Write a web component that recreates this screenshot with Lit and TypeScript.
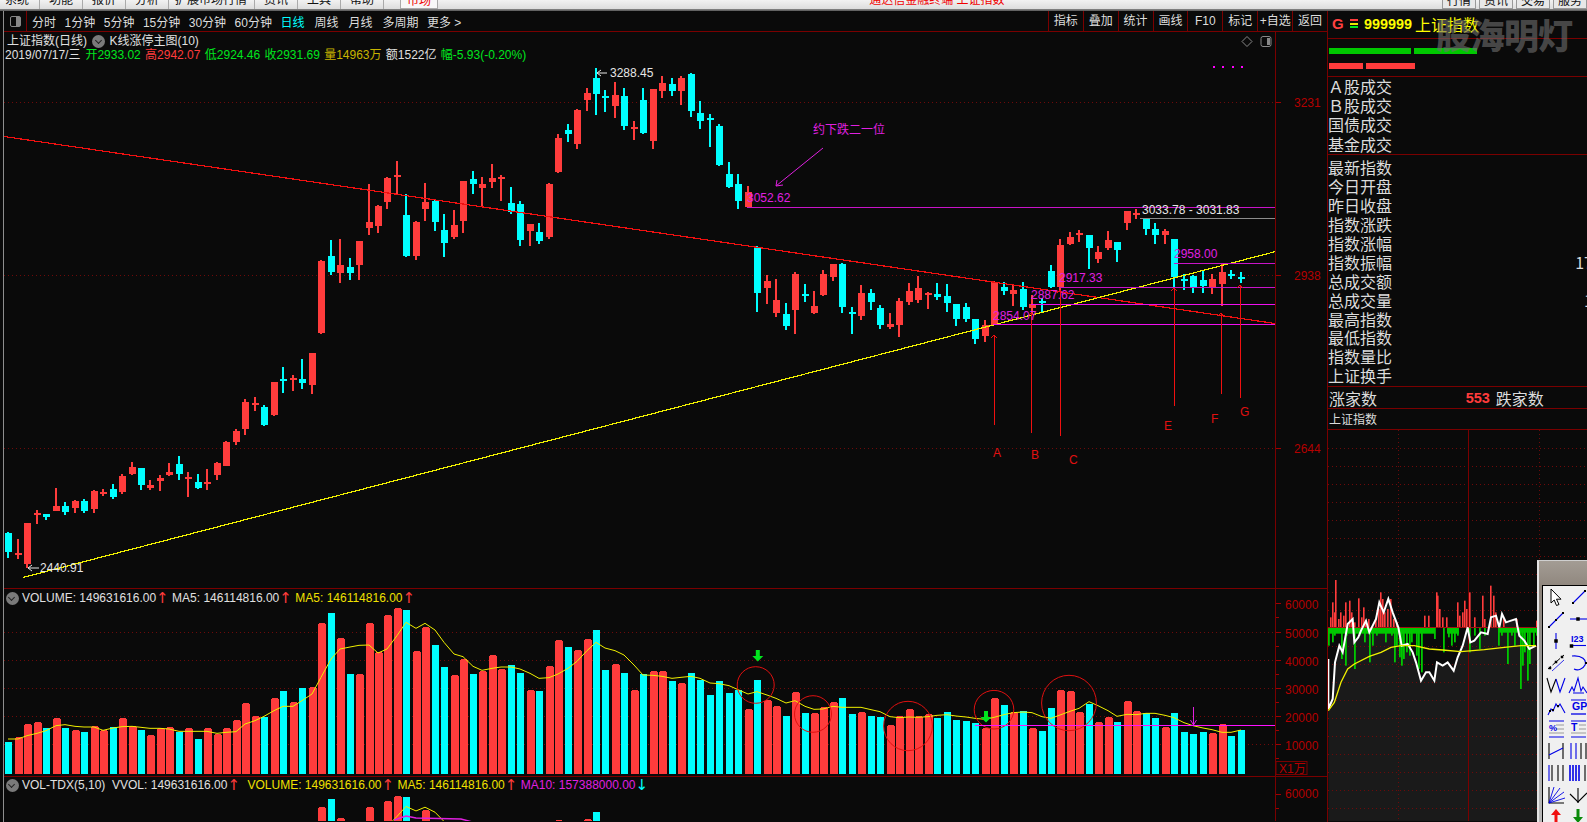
import { LitElement, html, svg, css } from "lit";
import { customElement } from "lit/decorators.js";

type C = [string, number, number, number, number];
const A: C[] = [["c",697,700,758,776],["r",717,760,765,776],["r",669,669,793,803],["r",630,638,644,671],["c",643,643,651,662],["r",565,618,633,635],["c",606,618,637,645],["r",601,604,626,641],["c",598,604,633,641],["r",571,574,629,640],["r",567,575,578,587],["c",552,568,591,596],["r",522,528,576,581],["r",487,502,522,525],["c",504,504,554,569],["r",541,556,564,572],["r",526,535,545,575],["r",490,517,527,530],["c",468,493,524,539],["r",517,531,534,593],["c",522,546,564,567],["r",508,547,551,572],["r",487,489,525,540],["r",424,426,498,500],["r",388,393,426,437],["r",297,306,386,404],["r",292,310,315,333],["c",316,321,374,380],["r",246,246,344,347],["c",201,238,245,278],["r",226,234,238,275],["c",178,238,250,267],["r",159,159,254,281]];
const B: C[] = [["r",600,603,819,821],["c",540,588,636,645],["r",538,615,639,669],["c",594,621,639,660],["r",543,543,615,660],["r",372,486,504,525],["r",435,438,498,519],["r",351,354,426,447],["r",303,345,351,405],["c",402,465,588,591],["r",483,486,588,600],["r",369,426,447,483],["c",417,423,486,513],["c",462,510,549,591],["r",450,495,531,537],["r",363,363,483,519],["c",333,357,372,402],["r",351,372,384,441],["r",312,354,366,384],["r",345,351,357,423],["c",381,429,456,462],["c",423,432,540,558],["r",492,492,513,558],["c",489,516,543,552],["r",369,372,531,537],["r",222,234,336,339],["c",192,210,222,246],["r",147,150,252,267],["r",84,99,120,153],["c",24,54,102,165],["c",90,107,111,156],["r",66,105,138,174],["c",84,108,198,210],["r",183,201,207,240],
["c",84,120,219,222],["r",87,87,243,267],["r",48,69,93,114],["c",54,72,93,108],["r",48,54,93,135],["c",39,42,153,171],["c",123,159,183,207],["c",162,174,177,261],["c",192,198,315,318],["c",306,342,381,384],["c",342,372,423,447],["r",378,396,441,441],["c",558,561,699,756],["r",645,663,684,732],["r",657,720,759,771],["c",729,762,798,810],["r",636,642,750,822],["c",672,702,705,726],["r",693,738,759,762],["r",630,642,705,708],["r",612,612,651,663],["c",609,612,741,759],["c",741,756,762,822],["r",675,699,768,780],["c",687,699,726,750],["c",735,744,795,807],["r",759,792,801,807],["r",714,723,795,831],["r",669,693,726,735],["r",648,684,720,729],["r",696,699,705,747],["c",669,702,711,720],["c",672,708,729,756],["c",732,732,777,798],["c",729,741,777,786],["c",777,777,837,852]];
const D: C[] = [["r",390,405,438,456],["r",273,276,405,405],["c",276,291,303,315],["r",285,300,312,348],["c",276,297,351,360],["r",315,342,354,375],["c",324,333,336,366],["c",225,243,290,294],["r",147,165,291,300],["r",126,141,162,165],["r",120,129,135,156],["c",135,135,174,237],["r",168,186,207,219],["r",123,150,174,180],["c",156,156,180,216],["r",63,63,99,120],["r",57,69,75,87],["c",87,87,117,135],["c",99,117,135,162],["r",117,123,135,162],["c",147,147,262,291],["c",252,267,273,300],["c",255,258,291,309],["c",240,270,288,309],["r",252,267,291,312],["r",222,246,282,348],["c",240,252,255,267],["c",246,261,264,279]];
const conv = (l: C[], o: number): C[] => l.map(([c, a, b, d, e]) => [c, o + a / 3, o + b / 3, o + d / 3, o + e / 3]);
const CANDLES: C[] = [...conv(A, 300), ...conv(B, 60), ...conv(D, 190)];

const VOL = [489,475,436,430,447,418,447,454,459,441,454,444,418,441,453,469,448,445,458,448,480,448,465,448,424,373,411,414,358,336,369,327,324,133,102,178,285,285,132,220,109,87,93,216,145,198,264,289,240,285,276,229,270,258,282,334,336,262,184,204,214,181,153,273,256,282,334,
285,276,276,306,313,282,303,348,306,342,333,391,303,363,382,411,340,402,402,384,370,357,405,400,411,414,438,411,390,411,405,417,399,423,426,432,448,358,378,400,397,448,456,387,334,337,400,375,430,415,429,367,397,402,417,445,402,459,465,459,463,435,471,453].map((z) => 580 + z / 3);
const MA = [480,480,470,463,455,440,437,442,444,444,454,447,443,442,445,448,448,450,457,457,457,457,463,460,458,435,425,412,395,382,382,365,345,295,240,210,204,199,198,222,210,170,130,148,133,153,190,225,233,262,274,268,264,264,270,283,298,296,285,268,247,215,190,207,215,228,258,
288,289,292,298,295,292,298,312,314,320,332,345,338,348,358,372,365,382,391,390,382,385,385,385,392,398,413,416,414,415,413,409,407,411,414,418,421,415,407,401,399,401,413,418,408,397,388,368,380,395,412,406,407,403,403,409,416,431,440,447,452,460,460,453].map((z) => 580 + z / 3);

const X = (i: number) => Math.round(8.3 + 9.479 * i);
const RED = "#ff3c3c";
const CY = "#00ffff";
const MINOR = (y: number) => 796.7 + (y - 609) * 0.75;

const WHITE_CURVE: [number, number][] = [[82,840],[82,990],[95,960],[102,850],[115,800],[125,820],[140,735],[155,720],[160,790],[172,775],[180,755],[195,725],[205,760],[225,720],[235,670],[248,700],[262,660],[275,700],[292,745],[302,800],[320,795],[335,820],[345,850],[360,905],[375,880],[385,880],[400,905],[408,850],[425,860],[440,850],[458,875],[470,835],[485,800],[500,745],[508,790],[520,785],[540,760],[560,765],[570,715],[585,710],[595,745],[603,705],[615,730],[630,725],[645,720],[655,770],[670,785],[685,810],[705,800]];
const YEL_CURVE: [number, number][] = [[82,995],[100,970],[120,910],[140,870],[160,855],[205,832],[240,820],[270,805],[300,800],[340,800],[385,810],[425,813],[480,818],[550,812],[610,805],[660,800],[705,800]];
const RED_SP = [[86,715],[92,670],[98,700],[103,603],[110,720],[116,700],[125,710],[133,670],[145,665],[150,700],[158,730],[172,658],[180,715],[186,685],[192,730],[200,720],[222,720],[232,690],[237,640],[243,660],[250,700],[258,690],[268,660],[275,720],[285,730],[368,710],[380,710],[404,640],[408,650],[415,690],[422,715],[435,715],[468,670],[475,710],[482,700],[488,665],[495,690],[503,640],[520,715],[542,650],[548,720],[568,620],[575,650],[582,700],[605,720],[645,720],[706,725]];
const GRN_SP = [[82,800],[92,790],[98,770],[120,840],[133,860],[135,770],[160,870],[175,770],[188,790],[205,850],[212,800],[225,770],[240,760],[252,790],[270,770],[278,850],[285,800],[293,835],[300,860],[305,840],[315,820],[325,830],[330,790],[345,830],[352,870],[360,880],[370,760],[385,760],[398,780],[425,820],[442,775],[450,800],[458,790],[468,770],[505,820],[520,770],[535,810],[550,770],[590,800],[600,770],[617,855],[630,770],[640,800],[656,930],[662,860],[668,820],[677,905],[685,855],[695,800],[706,770]];
const mx = (z: number) => 1300 + z / 3;
const my = (z: number) => 380 + z / 3;
const pts = (a: [number, number][]) => a.map(([x, y]) => `${mx(x)},${my(y)}`).join(" ");

const arrow = (x: number, y1: number, y2: number, col = "#f01010") => svg`
  <path class="crisp" d="M${x} ${y1}V${y2}M${x - 3.5} ${y2 + 3.5}L${x} ${y2}L${x + 3.5} ${y2 + 3.5}" fill="none" stroke="${col}" stroke-width="1"/>`;
const greenDown = (x: number, y1: number, y2: number) => svg`
  <path d="M${x - 2} ${y1}h4v${y2 - y1 - 5}h3.5l-5.5 5.5l-5.5 -5.5h3.5z" fill="#00e61e"/>`;

const candle = ([c, wt, bt, bb, wb]: C, i: number) => {
  const x = X(i);
  const col = c === "r" ? RED : CY;
  return svg`<rect x="${x - 1}" y="${Math.round(wt)}" width="2" height="${Math.round(wb - wt)}" fill="${col}"/><rect x="${x - 3.5 + 0.5}" y="${Math.round(bt)}" width="7" height="${Math.max(2, Math.round(bb - bt))}" fill="${col}"/>`;
};

const bars = (fy: (y: number) => number, bottom: number) =>
  VOL.map((t, i) => {
    const c = CANDLES[i][0] === "r";
    const y = Math.round(fy(t));
    const x = X(i) - 3;
    const w = c ? 8 : 7;
    return c
      ? svg`<path d="M${x + 1} ${y}h${w - 2}v1h1V${bottom}h${-w}V${y + 1}h1z" fill="${RED}"/>`
      : svg`<rect x="${x}" y="${y}" width="${w}" height="${bottom - y}" fill="${CY}"/>`;
  });

const B1 = "#0000e6";
const K = "#000";
const sq = (x: number, y: number, s = 2.5) => svg`<rect x="${x - s / 2}" y="${y - s / 2}" width="${s}" height="${s}" fill="${K}"/>`;
const vl = (x: number, c: string, w = 1.1) => svg`<path d="M${x} 3V19" stroke="${c}" stroke-width="${w}"/>`;
const toolIcons = [
  svg`<path d="M6 3V17L9.2 14L11.5 19.5L14 18.5L11.5 13.2H16Z" fill="#fff" stroke="#000" stroke-width="1"/>`,
  svg`<path d="M6 17L18 5" stroke="${B1}" stroke-width="1.1"/>${sq(6, 17, 2)}${sq(18, 5, 2)}`,
  svg`<path d="M4 19L18 5" stroke="${B1}" stroke-width="1.1"/>${sq(4, 19, 2)}${sq(11, 12, 2)}${sq(18, 5, 2)}`,
  svg`<path d="M3 11H20" stroke="${B1}" stroke-width="1.1"/>${sq(11, 11, 3.5)}`,
  svg`<path d="M11 3V19" stroke="${B1}" stroke-width="1.1"/>${sq(11, 11, 3.5)}`,
  svg`<text x="4" y="12" class="ti">I23</text><path d="M4 15.5H19" stroke="${B1}" stroke-width="1.1"/>${sq(4.5, 16, 3.5)}`,
  svg`<path d="M3 17L19 3" stroke="${K}" stroke-width="1" stroke-dasharray="4 2"/><path d="M7 19L19 8" stroke="${B1}" stroke-width="0.8"/>${sq(5, 16, 2.5)}${sq(11, 10, 2.5)}${sq(17, 5, 2.5)}`,
  svg`<path d="M5 4C15 3 20 8 18 13C16 17 11 19 7 17" fill="none" stroke="${B1}" stroke-width="1.2"/>${sq(19, 11, 2)}`,
  svg`<path d="M2 4L6 18L11 5" fill="none" stroke="${K}" stroke-width="1.1"/><path d="M11 5L15 18L20 4" fill="none" stroke="${B1}" stroke-width="1.1"/>`,
  svg`<path d="M2 19L5 13L7 17L11 4L14 17L16 13L20 19" fill="none" stroke="${B1}" stroke-width="1.1"/><path d="M6 19H17" stroke="${B1}"/>`,
  svg`<path d="M3 19L6 13L8 15L11 8L13 11L15 8L20 17" fill="none" stroke="${B1}" stroke-width="1.1"/>${sq(5, 15, 2)}${sq(8, 14, 2)}${sq(13, 10, 2)}`,
  svg`<path d="M4 4H19" stroke="${B1}" stroke-width="1"/><text x="5" y="14" class="ti big">GP</text><path d="M4 18H19" stroke="${B1}" stroke-width="1.3"/>`,
  svg`<path d="M4 3H19M4 19H19" stroke="${B1}" stroke-width="1.1"/><path d="M11 7H19M11 11H19M4 15H19" stroke="#999" stroke-width="1.1"/><text x="4" y="13" class="ti">%</text>`,
  svg`<path d="M4 3H19M4 19H19" stroke="${B1}" stroke-width="1.1"/><path d="M12 7H19M12 11H19M4 15H19" stroke="#999" stroke-width="1.1"/><text x="4" y="13" class="ti big">T</text>`,
  svg`${vl(4, K)}${vl(18, K)}<path d="M4 15L18 8" stroke="${B1}" stroke-width="1.1"/>`,
  svg`${vl(4, B1)}${vl(9, B1)}${vl(14, K)}${vl(19, K)}`,
  svg`${vl(4, B1)}${vl(7, K)}${vl(13, K)}${vl(18, K)}`,
  svg`${vl(3, B1, 1.6)}${vl(6, B1, 1.6)}${vl(9, B1, 1.6)}${vl(12, B1, 1.6)}${vl(18, K)}`,
  svg`<path d="M4 3V19H19" fill="none" stroke="${K}" stroke-width="1.1"/><path d="M4 19L19 8M4 19L15 4M4 19L9 3M4 19L20 14" stroke="${B1}" stroke-width="0.9"/>`,
  svg`<path d="M11 4V19" stroke="${K}" stroke-width="1.1"/><path d="M3 10L11 18L20 9" fill="none" stroke="${K}" stroke-width="1.1"/>`,
  svg`<path d="M11 3L16 9H12.5V22H9.5V9H6Z" fill="#f01010"/>`,
  svg`<path d="M9.5 3H12.5V11H16L11 17L6 11H9.5Z" fill="#0a8a0a"/><path d="M9.5 17H12.5V22H9.5Z" fill="#0a8a0a"/>`,
];

@customElement("app-root")
export class AppRoot extends LitElement {
  static styles = css`
    :host { display: block; width: 1587px; height: 822px; overflow: hidden; background: #0a0a0a; color: #ddd;
      font-family: "Liberation Sans", "Noto Sans CJK SC", sans-serif; font-size: 12px; }
    * { box-sizing: border-box; }
    .top { height: 9px; background: linear-gradient(#f2f2f2, #dcdcdc); display: flex; overflow: hidden; color: #111; position: relative; font-size: 12px; }
    .mi { height: 18px; margin-top: -9px; line-height: 18px; padding: 0 9px; border-right: 1px solid #aaa; white-space: nowrap; }
    .mi:first-child { padding: 0 10px 0 5px; }
    .mi.lng { padding: 0 7px 0 6px; }
    .tab { width: 38px; margin: -9px 0 0 16px; height: 18px; line-height: 18px; text-align: center; color: #f00000; background: #f8f8f8; border: 1px solid #aaa; flex: none; }
    .title { margin-left: 431px; height: 18px; margin-top: -9px; line-height: 18px; color: #f00000; font-size: 12px; white-space: pre; }
    .rtabs { margin-left: auto; display: flex; gap: 3px; }
    .rt { width: 34px; height: 18px; margin-top: -9px; line-height: 18px; text-align: center; border: 1px solid #999; background: #e8e8e8; }
    .shade { height: 2px; background: linear-gradient(#8a8a8a, #555); }
    .main { display: flex; height: 811px; }
    .edge { width: 4px; background: #0a0a0a; border-right: 1px solid #8e8e8e; }
    .col { width: 1323px; display: flex; flex-direction: column; }
    .tb { height: 21px; display: flex; align-items: center; border-bottom: 1px solid #7a0000; white-space: nowrap; }
    .pi { width: 23px; height: 20px; display: flex; align-items: center; justify-content: center; border-right: 1px solid #7a0000; margin-right: 5px; }
    .pi i { display: block; width: 11px; height: 11px; border: 1px solid #888; border-radius: 2px; background: linear-gradient(90deg, #0a0a0a 60%, #888 60%); }
    .ti0 { margin-right: 8.5px; color: #ddd; }
    .ti1 { margin-right: 10px; color: #ddd; }
    .cy { color: #00ffff; }
    .tr { margin-left: auto; display: flex; height: 20px; }
    .tr span { width: 34.9px; text-align: center; line-height: 20px; border-left: 1px solid #7a0000; }
    .pane { position: relative; overflow: hidden; border-bottom: 1px solid #7a0000; }
    .k { height: 557px; }
    .v1 { height: 188px; }
    .v2 { height: 44px; border-bottom: 0; }
    .pane svg { display: block; position: absolute; left: 0; top: 0; }
    .crisp { shape-rendering: crispEdges; }
    svg text { font-family: "Liberation Sans", "Noto Sans CJK SC", sans-serif; font-size: 12px; }
    .legend { position: absolute; left: 1.5px; white-space: nowrap; display: flex; align-items: center; height: 14px; line-height: 14px; }
    .dot { width: 13px; height: 13px; border-radius: 50%; background: #7a7a7a; margin-right: 3.5px; position: relative; flex: none; }
    .dot::after { content: ""; position: absolute; left: 3.5px; top: 3px; width: 4px; height: 4px; border: solid #222; border-width: 0 1.5px 1.5px 0; transform: rotate(45deg); }
    .dot.inl { margin: 0 4.5px 0 5px; }
    .w { color: #e0e0e0; } .g { color: #00e61e; } .r { color: #ff3c3c; } .y { color: #f0e000; } .yo { color: #c8b400; } .m { color: #e020e0; }
    .ua { display: inline-block; width: 10px; margin-right: 6px; text-align: center; font-size: 15px; font-family: "DejaVu Sans", sans-serif; }
    .ua.wide { margin-right: 10px; }
    .t1 { top: 2px; left: 3px; }
    .t2 { top: 16px; left: 1px; }
    .t2 span { margin-right: 4.3px; }
    .t2 .dmy { margin-right: 5px; }
    .side { width: 260px; position: relative; height: 811px; overflow: hidden; border-left: 1px solid #7a0000; }
    .hd { height: 28px; display: flex; align-items: center; border-bottom: 1px solid #7a0000; padding: 0 0 2px 4px; }
    .hd .G { color: #ff4040; font-size: 15px; width: 18px; font-weight: bold; }
    .hd .sym { width: 8px; height: 9px; margin-right: 6px; background: linear-gradient(#ff3c3c 0 2px, transparent 2px 4px, #e8e800 4px 6px, transparent 6px 7px, #00e61e 7px 9px); }
    .hd b { color: #ffff00; font-size: 14.4px; margin-right: 3px; }
    .hd .nm { color: #ffff00; font-size: 16px; }
    .pb { height: 38px; border-bottom: 1px solid #7a0000; padding: 9px 0 0 1px; display: flex; flex-direction: column; gap: 9px; }
    .pr { display: flex; gap: 3px; height: 6px; }
    .pr i { display: block; height: 6px; }
    .gr { background: #00c800; } .rd { background: #ff3c3c; }
    .wm { position: absolute; left: 108px; top: 1px; font-size: 35px; font-weight: 900; letter-spacing: -1px; color: rgba(112, 112, 112, 0.62); white-space: nowrap; line-height: 44px; font-family: "Noto Sans CJK SC", sans-serif; }
    .l1 { height: 78px; border-bottom: 1px solid #7a0000; }
    .l2 { height: 232px; padding: 3px 0 0 0; border-bottom: 1px solid #7a0000; }
    .row { height: 18.94px; line-height: 18.94px; font-size: 16px; color: #dcdcdc; display: flex; justify-content: space-between; font-family: "Noto Sans CJK SC", sans-serif; white-space: nowrap; }
    .l1 .row { height: 19.2px; line-height: 19.2px; }
    .row em { font-style: normal; margin-right: -6px; }
    .ud { height: 22px; border-bottom: 1px solid #7a0000; display: flex; align-items: center; padding-left: 1px; font-size: 16px; font-family: "Noto Sans CJK SC", sans-serif; color: #dcdcdc; }
    .ud b { margin: 0 6px 0 88.7px; color: #ff3c3c; font-family: "Liberation Sans", sans-serif; font-size: 14.5px; width: 24px; }
    .nm2 { height: 21px; line-height: 20px; border-bottom: 1px solid #7a0000; padding-left: 1px; font-size: 12px; color: #dcdcdc; font-family: "Noto Sans CJK SC", sans-serif; }
    .mini { display: block; }
    .tool { position: absolute; left: 209px; top: 549px; width: 60px; height: 273px; background: linear-gradient(#a39c94, #8c837a 30px, #9a9a9a 110px, #bcbcbc); border-top: 1px solid #cfcfcf; border-left: 2px solid #e4e4e4; }
    .tool-in { position: absolute; left: 3px; top: 24px; width: 60px; height: 250px; background: #f0f0f0; border: 1px solid #000; display: grid; grid-template-columns: 22.7px 22.7px; grid-auto-rows: 22px; padding-left: 1.5px; align-content: start; }
    .tool-in svg { width: 22px; height: 22px; display: block; overflow: visible; }
    .ti { font-size: 9px; font-weight: bold; fill: #0000e6; font-family: "Liberation Sans", sans-serif; }
    .big { font-size: 10.5px; }
  `;

  render() {
    const keys = ["分时", "1分钟", "5分钟", "15分钟", "30分钟", "60分钟"];
    const hgrid = [102.7, 275.4, 448.3];
    return html`
      <div class="top">
        ${["系统", "功能", "报价", "分析"].map((t) => html`<div class="mi">${t}</div>`)}
        <div class="mi lng">扩展市场行情</div>
        ${["资讯", "工具", "帮助"].map((t) => html`<div class="mi">${t}</div>`)}
        <div class="tab">市场</div>
        <div class="title">通达信金融终端 上证指数</div>
        <div class="rtabs">${["行情", "资讯", "交易", "服务"].map((t) => html`<div class="rt">${t}</div>`)}</div>
      </div>
      <div class="shade"></div>
      <div class="main">
        <div class="edge"></div>
        <div class="col">
          <div class="tb">
            <div class="pi"><i></i></div>
            ${keys.map((t) => html`<span class="ti0">${t}</span>`)}
            <span class="ti1 cy">日线</span><span class="ti1">周线</span><span class="ti1">月线</span><span class="ti0">多周期</span><span class="ti1">更多 &gt;</span>
            <div class="tr">${["指标", "叠加", "统计", "画线", "F10", "标记", "+自选", "返回"].map((t) => html`<span>${t}</span>`)}</div>
          </div>
          <div class="pane k">
            <svg width="1323" height="557" viewBox="4 32 1323 557">
              ${hgrid.map((y) => svg`<path class="crisp" d="M4 ${y}H1275" stroke="#6e0a0a" stroke-dasharray="1 3"/>`)}
              ${CANDLES.map(candle)}
              <path class="crisp" d="M4 136.5L1275 323.5" stroke="#f01010" stroke-width="1.2"/>
              <path class="crisp" d="M23 577.5L1275 251.7" stroke="#f0f000" stroke-width="1.2"/>
              <path class="crisp" d="M747 207.5H1275M1059 287.5H1275M1174 263.5H1275" stroke="#c814c8"/>
              <path class="crisp" d="M1031 304.5H1275M993 324.5H1275" stroke="#f010f0" stroke-width="1"/>
              <path class="crisp" d="M1140 218.5H1275" stroke="#8c8c8c"/>
              ${arrow(994, 425, 335)}${arrow(1031, 433, 313)}${arrow(1060, 436, 290)}${arrow(1174, 406, 288)}${arrow(1221, 394, 313)}${arrow(1240, 398, 285)}
              <path d="M823 148L776 186M776 186L777 180M776 186L783 185" fill="none" stroke="#e020e0" stroke-width="1"/>
              <text x="813" y="134" fill="#e020e0">约下跌二一位</text>
              <text x="747" y="202" fill="#e020e0">3052.62</text>
              <text x="1142" y="214" fill="#e6e6e6">3033.78 - 3031.83</text>
              <text x="1174" y="258" fill="#e020e0">2958.00</text>
              <text x="1059" y="282" fill="#e020e0">2917.33</text>
              <text x="1031" y="299" fill="#e020e0">2887.62</text>
              <text x="993" y="319.5" fill="#e020e0">2854.07</text>
              <text x="610" y="77" fill="#e6e6e6">3288.45</text>
              <path d="M607 73H597L601 70M597 73L601 76" fill="none" stroke="#e6e6e6"/>
              <text x="40" y="572" fill="#e6e6e6">2440.91</text>
              <path d="M39 568H28L32 565M28 568L32 571" fill="none" stroke="#e6e6e6"/>
              ${[["A", 993, 457], ["B", 1031, 459], ["C", 1069, 464], ["E", 1164, 430], ["F", 1211, 423], ["G", 1240, 416]].map(
                ([t, x, y]) => svg`<text x="${x}" y="${y}" fill="#e01010">${t}</text>`
              )}
              ${[1213, 1222, 1232, 1241].map((x) => svg`<rect x="${x}" y="66" width="2" height="2" fill="#ff00ff"/>`)}
              <path d="M1247 36.5L1252 41.5L1247 46.5L1242 41.5Z" fill="none" stroke="#888"/>
              <rect x="1261" y="36.5" width="10" height="10" rx="2" fill="none" stroke="#888"/><rect x="1267" y="38" width="3" height="7" fill="#888"/>
              <path d="M1275.5 32V589" stroke="#7a0000"/>
              ${hgrid.map((y, i) => svg`<path class="crisp" d="M1276 ${y}H1281" stroke="#a00000"/><text x="1294" y="${y + 4.5}" fill="#b40000">${["3231", "2938", "2644"][i]}</text>`)}
            </svg>
            <div class="legend t1"><span class="w">上证指数(日线)</span><span class="dot inl"></span><span class="w">K线涨停主图(10)</span></div>
            <div class="legend t2">
              <span class="w dmy">2019/07/17/三</span><span class="g">开2933.02</span><span class="r">高2942.07</span><span class="g">低2924.46</span><span class="g">收2931.69</span><span class="yo">量14963万</span><span class="w">额1522亿</span><span class="g">幅-5.93(-0.20%)</span>
            </div>
          </div>
          <div class="pane v1">
            <svg width="1323" height="188" viewBox="4 590 1323 188">
              ${[633.3, 661.3, 689.3, 717.3, 745.3].map((y) => svg`<path class="crisp" d="M4 ${y}H1275" stroke="#6e0a0a" stroke-dasharray="1 3"/>`)}
              ${bars((y) => y, 775)}
              <polyline points="${MA.map((y, i) => `${X(i)},${y}`).join(" ")}" fill="none" stroke="#f0f000" stroke-width="1"/>
              <ellipse cx="755.7" cy="686" rx="18.5" ry="18.3" fill="none" stroke="#e01010"/>
              <ellipse cx="813" cy="715" rx="18.5" ry="18.3" fill="none" stroke="#e01010"/>
              <ellipse cx="908" cy="727" rx="24.4" ry="24.7" fill="none" stroke="#e01010"/>
              <ellipse cx="994" cy="710.7" rx="19.8" ry="19.3" fill="none" stroke="#e01010"/>
              <ellipse cx="1069" cy="704" rx="27.4" ry="27.7" fill="none" stroke="#e01010"/>
              ${greenDown(757.8, 651, 662)}${greenDown(986, 712, 723)}
              <path class="crisp" d="M975 726.5H1275" stroke="#ff10ff" stroke-width="1"/>
              <path d="M1193.5 708V726M1190.5 721L1193.5 726L1196.5 721" fill="none" stroke="#e020e0"/>
              <path d="M1275.5 590V778" stroke="#7a0000"/>
              ${[604, 633, 661, 689, 717, 745].map((y, i) => svg`<path class="crisp" d="M1276 ${y}H1281M1276 ${y + 14}H1279" stroke="#a00000"/><text x="1285" y="${y + 5.5}" fill="#b40000">${(60 - i * 10) + "000"}</text>`)}
              <rect x="1276" y="762.5" width="31" height="13" fill="none" stroke="#7a0000"/>
              <text x="1279" y="773.5" fill="#b40000">X1万</text>
            </svg>
            <div class="legend" style="top:2px">
              <span class="dot"></span><span class="w">VOLUME: 149631616.00</span><span class="r ua">↑</span><span class="w">MA5: 146114816.00</span><span class="r ua">↑</span><span class="y">MA5: 146114816.00</span><span class="r ua">↑</span>
            </div>
          </div>
          <div class="pane v2">
            <svg width="1323" height="44" viewBox="4 778 1323 44">
              ${bars(MINOR, 830)}
              <polyline points="${MA.map((y, i) => `${X(i)},${MINOR(y)}`).join(" ")}" fill="none" stroke="#f0f000"/>
              <polyline points="394,821 406,817 416,819 461,820 480,825" fill="none" stroke="#e020e0" stroke-width="1.5"/>
              <path d="M1275.5 778V822" stroke="#7a0000"/>
              <path class="crisp" d="M1276 795H1281M1276 809H1279" stroke="#a00000"/><text x="1285" y="799" fill="#b40000">60000</text>
            </svg>
            <div class="legend" style="top:1px">
              <span class="dot"></span><span class="w">VOL-TDX(5,10)&nbsp;&nbsp;VVOL: 149631616.00</span><span class="r ua wide">↑</span><span class="y">VOLUME: 149631616.00</span><span class="r ua">↑</span><span class="y">MA5: 146114816.00</span><span class="r ua">↑</span><span class="m">MA10: 157388000.00</span><span class="cy ua">↓</span>
            </div>
          </div>
        </div>
        <div class="side">
          <div class="hd"><span class="G">G</span><span class="sym"></span><b>999999</b><span class="nm">上证指数</span></div>
          <div class="pb">
            <div class="pr"><i class="gr" style="width:82px"></i><i class="gr" style="width:63px"></i></div>
            <div class="pr"><i class="rd" style="width:34px"></i><i class="rd" style="width:49px"></i></div>
          </div>
          <div class="l1">${["Ａ股成交", "Ｂ股成交", "国债成交", "基金成交"].map((t) => html`<div class="row">${t}</div>`)}</div>
          <div class="l2">
            ${[["最新指数", ""], ["今日开盘", ""], ["昨日收盘", ""], ["指数涨跌", ""], ["指数涨幅", ""], ["指数振幅", "17"], ["总成交额", ""], ["总成交量", "1"], ["最高指数", ""], ["最低指数", ""], ["指数量比", ""], ["上证换手", ""]].map(
              ([t, v]) => html`<div class="row"><span>${t}</span><em>${v}</em></div>`
            )}
          </div>
          <div class="ud">涨家数<b>553</b><span>跌家数</span></div>
          <div class="nm2">上证指数</div>
          <svg class="mini" width="260" height="392" viewBox="1327 431 260 392">
            <polygon points="${mx(82)},822 ${pts(WHITE_CURVE)} 1587,${my(800)} 1587,822" fill="#1a1a1a"/>
            ${Array.from({ length: 21 }, (_, i) => 449.3 + i * 18).filter((y) => Math.abs(y - 629.3) > 2).map(
              (y) => svg`<path class="crisp" d="M1327 ${y}H1587" stroke="#6e0a0a" stroke-dasharray="1 3"/>`
            )}
            <path class="crisp" d="M1397.7 431V822M1538.3 431V822" stroke="#6e0a0a" stroke-dasharray="1 3"/>
            <path class="crisp" d="M1467.3 431V822" stroke="#7a0000"/>
            ${RED_SP.map(([x, y]) => svg`<rect x="${Math.round(mx(x))}" y="${my(y)}" width="1.6" height="${my(746) - my(y)}" fill="${RED}"/>`)}
            <rect x="1327" y="${my(746)}" width="107" height="6" fill="#00c800"/>
            <rect x="1446" y="${my(746)}" width="12" height="6" fill="#00c800"/>
            <rect x="1497" y="${my(746)}" width="40" height="5" fill="#00c800"/>
            ${GRN_SP.map(([x, y]) => svg`<rect x="${Math.round(mx(x))}" y="${my(746)}" width="1.8" height="${my(y) - my(746)}" fill="#00c800"/>`)}
            <path class="crisp" d="M1327 ${my(746)}H1587" stroke="#a01010"/>
            <polyline points="${pts(WHITE_CURVE)}" fill="none" stroke="#fff" stroke-width="2"/>
            <polyline points="${pts(YEL_CURVE)}" fill="none" stroke="#f0f000" stroke-width="1.3"/>
          </svg>
          <div class="wm">股海明灯</div>
          <div class="tool">
            <div class="tool-in">${toolIcons.map((g) => html`<svg viewBox="0 0 22 22">${g}</svg>`)}</div>
          </div>
        </div>
      </div>
    `;
  }
}
